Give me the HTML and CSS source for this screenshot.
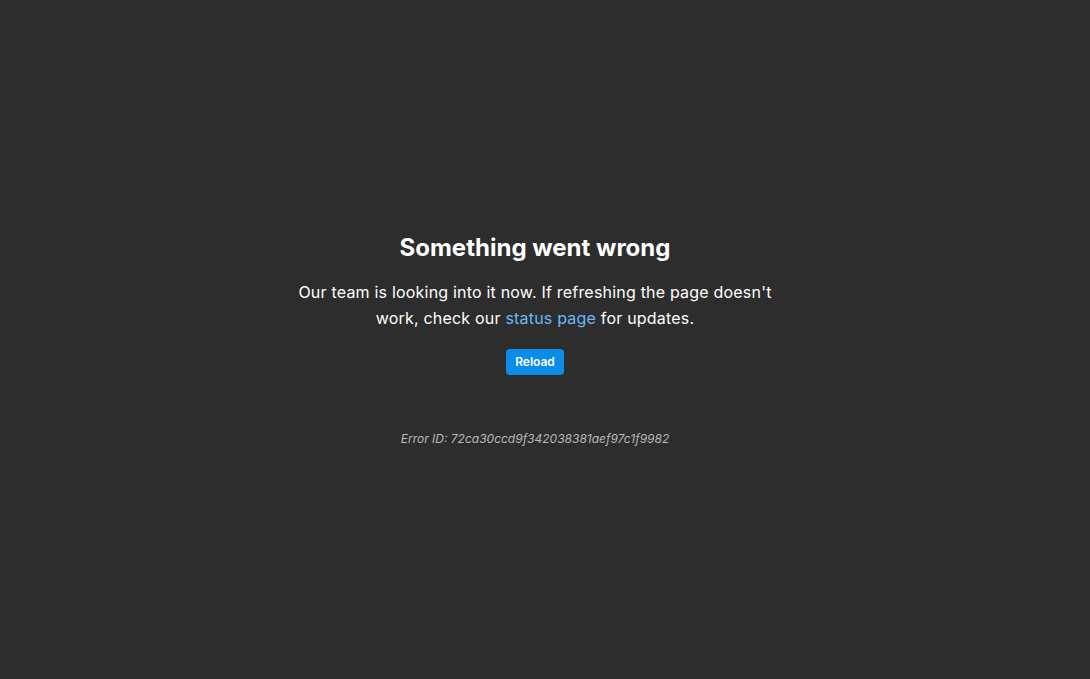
FILE: index.html
```html
<!DOCTYPE html>
<html>
<head>
<meta charset="utf-8">
<link rel="stylesheet" href="styles.css">
</head>
<body>
<main class="page">
  <div class="box">
    <h1 class="title">Something went wrong</h1>
    <p class="msg">Our team is looking into it now. If refreshing the page doesn't work, check our <a class="link" href="#">status page</a> for updates.</p>
    <button class="btn">Reload</button>
    <p class="err">Error ID: 72ca30ccd9f342038381aef97c1f9982</p>
  </div>
</main>
</body>
</html>
```
FILE: styles.css
```css
html, body { margin: 0; padding: 0; height: 100%; }
body { background: #2d2d2d; font-family: Inter, "Noto Sans", sans-serif; color: #fff; }
.page { height: 100%; box-sizing: border-box; padding-right: 20px; display: flex; align-items: center; justify-content: center; }
.box { display: flex; flex-direction: column; align-items: center; text-align: center; width: 490px; }
.title { margin: 0; font-size: 24px; line-height: 32px; font-weight: 700; }
.msg { margin: 15px 0 0; font-size: 16px; letter-spacing: 0.2px; line-height: 26px; }
.link { color: #6ab8f7; text-decoration: none; }
.btn { margin-top: 18px; background: #0b8ce9; color: #fff; border: none; border-radius: 4px; font-family: Inter, sans-serif; font-size: 12px; font-weight: 600; height: 26px; padding: 0 9px; }
.err { margin: 55px 0 0; font-size: 12px; line-height: 18px; font-style: italic; color: #b8b8b8; }
```
